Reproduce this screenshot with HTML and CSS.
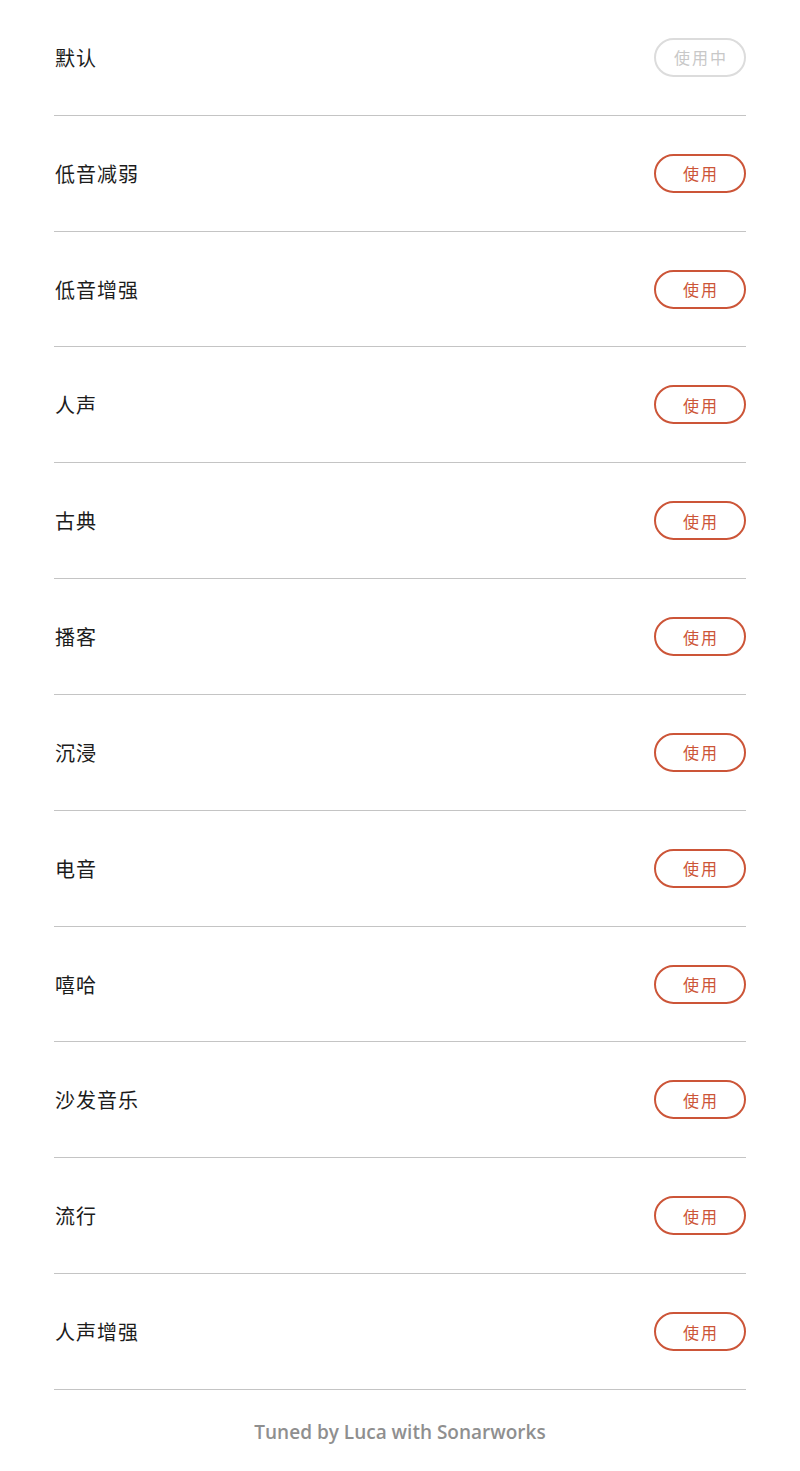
FILE: index.html
```html
<!DOCTYPE html>
<html lang="zh">
<head>
<meta charset="utf-8">
<link rel="stylesheet" href="styles.css">
</head>
<body>
<div class="list">
  <div class="row"><span class="name">默认</span><span class="btn btn-active">使用中</span></div>
  <div class="row"><span class="name">低音减弱</span><span class="btn">使用</span></div>
  <div class="row"><span class="name">低音增强</span><span class="btn">使用</span></div>
  <div class="row"><span class="name">人声</span><span class="btn">使用</span></div>
  <div class="row"><span class="name">古典</span><span class="btn">使用</span></div>
  <div class="row"><span class="name">播客</span><span class="btn">使用</span></div>
  <div class="row"><span class="name">沉浸</span><span class="btn">使用</span></div>
  <div class="row"><span class="name">电音</span><span class="btn">使用</span></div>
  <div class="row"><span class="name">嘻哈</span><span class="btn">使用</span></div>
  <div class="row"><span class="name">沙发音乐</span><span class="btn">使用</span></div>
  <div class="row"><span class="name">流行</span><span class="btn">使用</span></div>
  <div class="row"><span class="name">人声增强</span><span class="btn">使用</span></div>
</div>
<div class="footer">Tuned by Luca with Sonarworks</div>
</body>
</html>
```
FILE: styles.css
```css
html, body {
  margin: 0;
  padding: 0;
  background: #fff;
}
body {
  font-family: "Noto Sans CJK SC", "Noto Sans", sans-serif;
  color: #1c1c1c;
}
.list {
  margin: 0 54px;
}
.row {
  height: 114.83px;
  border-bottom: 1px solid #c4c4c4;
  display: flex;
  align-items: center;
  justify-content: space-between;
}
.name {
  font-size: 20px;
  letter-spacing: 1px;
  padding-left: 1px;
}
.btn {
  box-sizing: border-box;
  width: 92px;
  height: 39px;
  border: 2px solid #cc5538;
  border-radius: 20px;
  color: #cc5538;
  font-size: 16px;
  letter-spacing: 2px;
  display: flex;
  align-items: center;
  justify-content: center;
  padding-left: 2px;
}
.btn-active {
  border-color: #dcdcdc;
  color: #c8c8c8;
}
.footer {
  text-align: center;
  font-family: "Open Sans", sans-serif;
  font-weight: 600;
  font-size: 19px;
  color: #8f8f8f;
  padding-top: 29px;
}
```
